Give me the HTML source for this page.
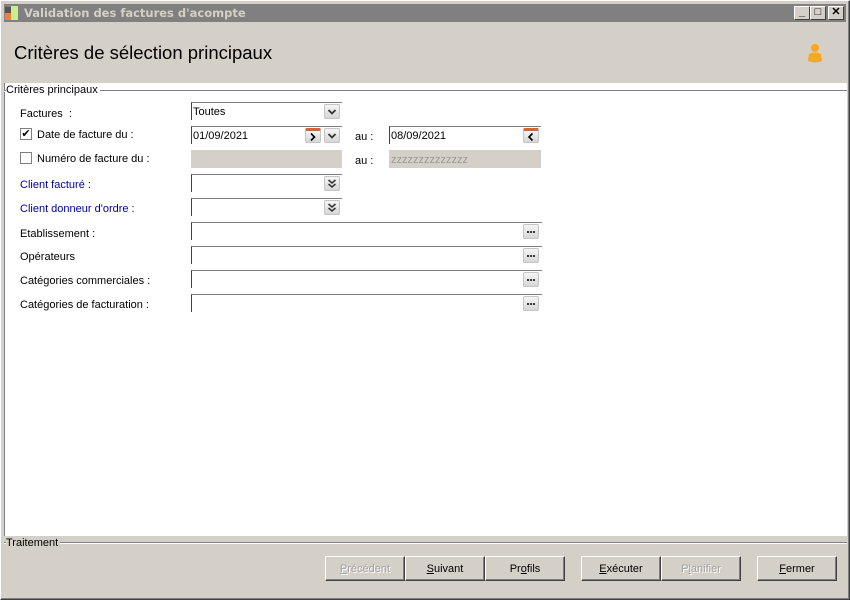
<!DOCTYPE html>
<html><head><meta charset="utf-8"><style>
*{box-sizing:border-box;margin:0;padding:0}
body{width:850px;height:600px;background:#d4d0c8;font-family:"Liberation Sans",Tahoma,sans-serif;font-size:11px;color:#000;position:relative;overflow:hidden}
.abs{position:absolute}
#win{left:0;top:0;width:850px;height:600px;border:1px solid #fff;border-right-color:#404040;border-bottom-color:#404040;box-shadow:inset -1px -1px #808080,inset 1px 1px #d4d0c8}
#title{left:4px;top:4px;width:842px;height:18px;background:#808080;color:#d4d0c8;font-weight:bold;line-height:18px;padding-left:20px;font-family:"DejaVu Sans",sans-serif;font-size:11.5px}
.tb{top:6px;width:16px;height:14px;background:#d4d0c8;border:1px solid #fff;border-right-color:#404040;border-bottom-color:#404040;font-size:11px;line-height:11px;text-align:center;font-weight:bold;color:#000}
#hdr{left:14px;top:42px;font-size:18.5px}
#panel{left:4px;top:83px;width:843px;height:453px;background:#fff;border-left:1px solid #808080}
.legend{font-size:11px;background:#d4d0c8}
.lab{left:20px;font-size:11px}
.blue{color:#0000a0}
.inp{height:18px;border-top:1px solid #808080;border-left:1px solid #404040;background:#fff;padding:3px 0 0 1px;font-size:11px}
.dis{background:#d4d0c8;color:#999}
.dd{width:16px;height:15px;border:1px solid #c4c4c4;background:linear-gradient(#f6f6f6,#d6d6d6);border-radius:2px}
.dd svg{position:absolute;left:0;top:0}
.btn{top:556px;width:80px;height:25px;border:1px solid #fff;border-right-color:#404040;border-bottom-color:#404040;box-shadow:inset -1px -1px #808080;text-align:center;line-height:24px;font-size:11px;background:#d4d0c8}
.gr{color:#a0a0a0;text-shadow:1px 1px #fff}
.cb{width:12px;height:12px;border:1px solid #808080;background:#fff;font-size:11px;line-height:10px;text-align:center}
</style></head><body>
<div id="win" class="abs"></div>
<div id="title" class="abs">Validation des factures d'acompte</div>
<div class="abs" style="left:5px;top:7px;width:6px;height:12px;background:#555"></div>
<div class="abs" style="left:5px;top:13px;width:6px;height:7px;background:#f08040"></div>
<div class="abs" style="left:11px;top:6px;width:7px;height:14px;background:#c8f090"></div>
<div class="abs tb" style="left:794px">_</div>
<div class="abs tb" style="left:810px">□</div>
<div class="abs tb" style="left:828px">✕</div>
<div id="hdr" class="abs">Critères de sélection principaux</div>
<svg class="abs" style="left:806px;top:42px" width="18" height="24"><circle cx="9" cy="6" r="4" fill="#f5a820"/><path d="M3 12 Q9 9 15 12 L16 19 Q9 22 2 19 Z" fill="#f5a820"/></svg>
<div id="panel" class="abs"></div>
<div class="abs" style="left:4px;top:90px;width:843px;height:1px;background:#808080"></div>
<div class="abs" style="left:4px;top:91px;width:843px;height:1px;background:#fff"></div>
<div class="abs legend" style="left:6px;top:84px;background:#fff;padding-right:2px">Critères principaux</div>

<div class="abs lab" style="top:108px">Factures &nbsp;:</div>
<div class="abs cb" style="left:20px;top:128px">✔</div>
<div class="abs lab" style="left:37px;top:129px">Date de facture du :</div>
<div class="abs cb" style="left:20px;top:152px"></div>
<div class="abs lab" style="left:37px;top:153px">Numéro de facture du :</div>
<div class="abs lab blue" style="top:179px">Client facturé :</div>
<div class="abs lab blue" style="top:203px">Client donneur d'ordre :</div>
<div class="abs lab" style="top:228px">Etablissement :</div>
<div class="abs lab" style="top:251px">Opérateurs</div>
<div class="abs lab" style="top:275px">Catégories commerciales :</div>
<div class="abs lab" style="top:299px">Catégories de facturation :</div>
<div class="abs lab" style="left:355px;top:131px">au :</div>
<div class="abs lab" style="left:355px;top:155px">au :</div>

<div class="abs inp" style="left:191px;top:102px;width:151px">Toutes</div>
<div class="abs dd" style="left:324px;top:104px"><svg width="14" height="13"><path d="M3.5 5 L7 8.5 L10.5 5" stroke="#333" stroke-width="1.8" fill="none"/></svg></div>
<div class="abs inp" style="left:191px;top:126px;width:151px">01/09/2021</div>
<div class="abs dd" style="left:305px;top:128px;border-top:3px solid #e06030"><svg width="14" height="11"><path d="M5 2.5 L8.5 6 L5 9.5" stroke="#000" stroke-width="1.6" fill="none"/></svg></div>
<div class="abs dd" style="left:324px;top:128px"><svg width="14" height="13"><path d="M3.5 5 L7 8.5 L10.5 5" stroke="#333" stroke-width="1.8" fill="none"/></svg></div>
<div class="abs inp dis" style="left:191px;top:150px;width:151px;border-left-color:#d4d0c8;border-top-color:#d4d0c8"></div>
<div class="abs inp" style="left:389px;top:126px;width:152px">08/09/2021</div>
<div class="abs dd" style="left:523px;top:128px;border-top:3px solid #e06030"><svg width="14" height="11"><path d="M8.5 2.5 L5 6 L8.5 9.5" stroke="#000" stroke-width="1.6" fill="none"/></svg></div>
<div class="abs inp dis" style="left:389px;top:150px;width:152px;border-left-color:#d4d0c8;border-top-color:#d4d0c8">zzzzzzzzzzzzzz</div>
<div class="abs inp" style="left:191px;top:174px;width:151px"></div>
<div class="abs dd" style="left:324px;top:176px"><svg width="14" height="13"><path d="M3.5 3 L7 6 L10.5 3 M3.5 7 L7 10 L10.5 7" stroke="#333" stroke-width="1.5" fill="none"/></svg></div>
<div class="abs inp" style="left:191px;top:198px;width:151px"></div>
<div class="abs dd" style="left:324px;top:200px"><svg width="14" height="13"><path d="M3.5 3 L7 6 L10.5 3 M3.5 7 L7 10 L10.5 7" stroke="#333" stroke-width="1.5" fill="none"/></svg></div>
<div class="abs inp" style="left:191px;top:222px;width:351px"></div>
<div class="abs dd" style="left:523px;top:224px"><svg width="14" height="13"><path d="M3 7h2M6 7h2M9 7h2" stroke="#333" stroke-width="2"/></svg></div>
<div class="abs inp" style="left:191px;top:246px;width:351px"></div>
<div class="abs dd" style="left:523px;top:248px"><svg width="14" height="13"><path d="M3 7h2M6 7h2M9 7h2" stroke="#333" stroke-width="2"/></svg></div>
<div class="abs inp" style="left:191px;top:270px;width:351px"></div>
<div class="abs dd" style="left:523px;top:272px"><svg width="14" height="13"><path d="M3 7h2M6 7h2M9 7h2" stroke="#333" stroke-width="2"/></svg></div>
<div class="abs inp" style="left:191px;top:294px;width:351px"></div>
<div class="abs dd" style="left:523px;top:296px"><svg width="14" height="13"><path d="M3 7h2M6 7h2M9 7h2" stroke="#333" stroke-width="2"/></svg></div>

<div class="abs" style="left:4px;top:542px;width:843px;height:1px;background:#808080"></div>
<div class="abs" style="left:4px;top:543px;width:843px;height:1px;background:#fff"></div>
<div class="abs legend" style="left:6px;top:537px;padding-right:2px">Traitement</div>

<div class="abs btn gr" style="left:325px"><u>P</u>récédent</div>
<div class="abs btn" style="left:405px"><u>S</u>uivant</div>
<div class="abs btn" style="left:485px">Pr<u>o</u>fils</div>
<div class="abs btn" style="left:581px"><u>E</u>xécuter</div>
<div class="abs btn gr" style="left:661px">P<u>l</u>anifier</div>
<div class="abs btn" style="left:757px"><u>F</u>ermer</div>
</body></html>
